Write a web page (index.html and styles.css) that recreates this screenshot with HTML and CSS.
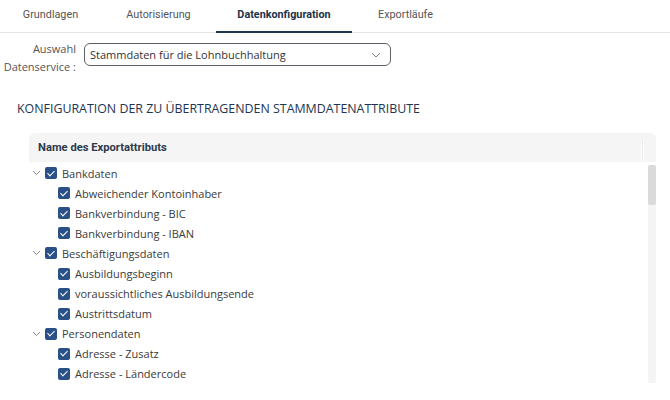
FILE: index.html
```html
<!DOCTYPE html>
<html lang="de">
<head>
<meta charset="utf-8">
<link rel="stylesheet" href="styles.css">
</head>
<body>
<div class="page">
  <nav class="tabs">
    <div class="tab t1">Grundlagen</div>
    <div class="tab t2">Autorisierung</div>
    <div class="tab t3 active">Datenkonfiguration</div>
    <div class="tab t4">Exportläufe</div>
  </nav>
  <div class="field">
    <label class="field-label">Auswahl<br>Datenservice :</label>
    <div class="select">
      <span>Stammdaten für die Lohnbuchhaltung</span>
      <svg class="chev" width="10" height="6" viewBox="0 0 10 6"><path d="M1 1l4 4 4-4" fill="none" stroke="#777" stroke-width="1"/></svg>
    </div>
  </div>
  <h2 class="heading">KONFIGURATION DER ZU ÜBERTRAGENDEN STAMMDATENATTRIBUTE</h2>
  <div class="table">
    <div class="thead"><span>Name des Exportattributs</span><i class="sep"></i></div>
    <div class="tbody">
      <ul class="tree">
        <li class="row parent"><svg class="exp" width="9" height="6" viewBox="0 0 9 6"><path d="M1 1l3.5 3.5L8 1" fill="none" stroke="#888" stroke-width="1"/></svg><span class="cb"></span>Bankdaten</li>
        <li class="row child"><span class="cb"></span>Abweichender Kontoinhaber</li>
        <li class="row child"><span class="cb"></span>Bankverbindung - BIC</li>
        <li class="row child"><span class="cb"></span>Bankverbindung - IBAN</li>
        <li class="row parent"><svg class="exp" width="9" height="6" viewBox="0 0 9 6"><path d="M1 1l3.5 3.5L8 1" fill="none" stroke="#888" stroke-width="1"/></svg><span class="cb"></span>Beschäftigungsdaten</li>
        <li class="row child"><span class="cb"></span>Ausbildungsbeginn</li>
        <li class="row child"><span class="cb"></span>voraussichtliches Ausbildungsende</li>
        <li class="row child"><span class="cb"></span>Austrittsdatum</li>
        <li class="row parent"><svg class="exp" width="9" height="6" viewBox="0 0 9 6"><path d="M1 1l3.5 3.5L8 1" fill="none" stroke="#888" stroke-width="1"/></svg><span class="cb"></span>Personendaten</li>
        <li class="row child"><span class="cb"></span>Adresse - Zusatz</li>
        <li class="row child"><span class="cb"></span>Adresse - Ländercode</li>
      </ul>
      <div class="scroll"><div class="thumb"></div></div>
    </div>
  </div>
</div>
</body>
</html>
```
FILE: styles.css
```css
* { box-sizing: border-box; }
html, body { margin: 0; padding: 0; background: #fff; }
body { width: 670px; height: 400px; overflow: hidden; font-family: "Open Sans", sans-serif; color: #333; }
.page { display: flex; flex-direction: column; }

.tabs { display: flex; height: 33px; border-bottom: 1px solid #e6e6e6; }
.tab { font-family: Roboto, sans-serif; font-size: 10.8px; color: #555; display: flex; align-items: center; justify-content: center; height: 32px; padding-bottom: 3px; white-space: nowrap; }
.t1 { width: 101px; }
.t2 { width: 115px; }
.t3 { width: 136px; }
.t4 { width: 107px; }
.tab.active { color: #22324a; font-weight: 700; border-bottom: 2px solid #22354f; height: 33px; padding-bottom: 2px; margin-bottom: -1px; }

.field { display: flex; align-items: flex-start; margin-top: 10px; }
.field-label { width: 84px; padding-right: 8px; text-align: right; font-size: 11px; line-height: 18px; color: #555; margin-top: -3px; white-space: nowrap; }
.select { width: 307px; height: 23px; border: 1px solid #5d6066; border-radius: 6px; display: flex; align-items: center; justify-content: space-between; padding: 0 9px 0 5px; font-size: 11px; color: #333; }
.chev { margin-top: 1px; }

.heading { margin: 25px 0 0 17px; font-family: "Open Sans", sans-serif; font-weight: 400; font-size: 12.4px; color: #1d3552; line-height: 16px; }

.table { margin: 16px 14px 0 29px; }
.thead { height: 29px; background: #f5f5f5; border-radius: 6px 6px 0 0; display: flex; align-items: center; padding-left: 9px; position: relative; }
.thead span { font-family: Roboto, sans-serif; font-weight: 700; font-size: 11.2px; color: #2c3a4d; }
.sep { position: absolute; left: 612px; top: 7px; width: 3px; height: 21px; border-left: 1px solid #fff; border-right: 1px solid #fff; background: #e8e8e8; }
.tbody { display: flex; }
.tree { list-style: none; margin: 1px 0 0 0; padding: 0; flex: 1; }
.row { display: flex; align-items: center; height: 20.1px; font-size: 11px; color: #3a3a3a; white-space: nowrap; }
.parent { padding-left: 3px; }
.child { padding-left: 29px; }
.exp { margin-right: 4px; }
.cb { width: 12px; height: 12px; border-radius: 2px; background: #2a5088; margin-right: 5px; position: relative; }
.cb::after { content: ""; position: absolute; left: 4px; top: 1.5px; width: 3px; height: 6px; border: solid #fff; border-width: 0 1.6px 1.6px 0; transform: rotate(45deg); }
.scroll { width: 8px; height: 218px; background: #f4f4f4; margin-top: 3px; border-radius: 2px; }
.thumb { height: 40px; background: #dadada; border-radius: 2px; }
```
